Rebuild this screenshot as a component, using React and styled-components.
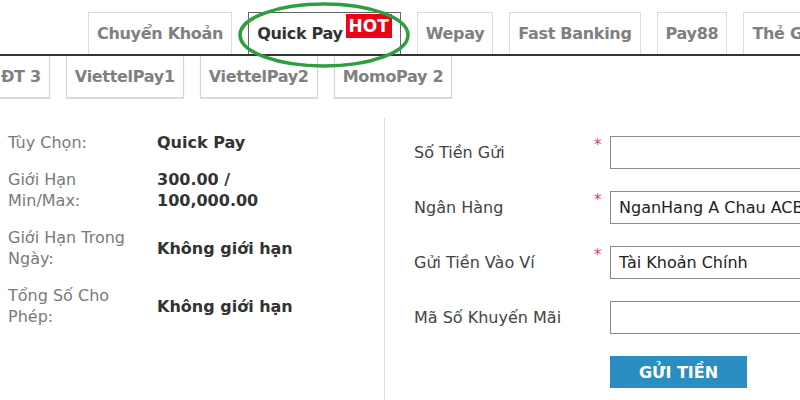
import React from 'react';
import styled, { createGlobalStyle } from 'styled-components';

const GlobalStyle = createGlobalStyle`
  body {
    margin: 0;
    background: #fff;
    font-family: Tahoma, "DejaVu Sans", sans-serif;
    overflow: hidden;
  }
`;

const Page = styled.div`
  width: 800px;
  height: 400px;
  overflow: hidden;
  background: #fff;
`;

const TabsArea = styled.div`
  position: relative;
`;

const TopRow = styled.div`
  display: flex;
  gap: 16px;
  padding: 12px 0 0 88px;
  border-bottom: 2px solid #333;
  white-space: nowrap;
`;

const Tab = styled.div`
  position: relative;
  display: flex;
  align-items: center;
  flex-shrink: 0;
  height: 42px;
  box-sizing: border-box;
  padding: 0 ${p => (p.hot ? '57px' : '8px')} 0 8px;
  border: 1px solid ${p => (p.active ? '#666' : '#ddd')};
  border-bottom: none;
  font-size: 16px;
  font-weight: bold;
  letter-spacing: -0.3px;
  color: ${p => (p.active ? '#333' : '#808080')};
  background: #fff;
`;

const Hot = styled.span`
  position: absolute;
  top: 1px;
  right: 8px;
  width: 46px;
  height: 24px;
  display: flex;
  align-items: center;
  justify-content: center;
  background: #ee0016;
  color: #fff;
  font-size: 17px;
  font-weight: bold;
  letter-spacing: 0;
`;

const BottomRow = styled.div`
  display: flex;
  gap: 16px;
  margin-left: -8px;
  white-space: nowrap;
`;

const SubTab = styled.div`
  display: flex;
  align-items: center;
  flex-shrink: 0;
  height: 42px;
  box-sizing: border-box;
  padding: 0 8px;
  border: 1px solid #d4d4d4;
  border-top: none;
  box-shadow: 0 1px 1px rgba(0, 0, 0, 0.12);
  font-size: 16px;
  font-weight: bold;
  letter-spacing: -0.3px;
  color: #808080;
`;

const Circle = styled.svg`
  position: absolute;
  left: 237px;
  top: 1px;
  pointer-events: none;
`;

const Content = styled.div`
  display: flex;
  margin-top: 20px;
`;

const InfoPanel = styled.div`
  flex-shrink: 0;
  width: 385px;
  height: 290px;
  box-sizing: border-box;
  padding: 14px 0 0 8px;
  border-right: 1px solid #ddd;
  display: grid;
  grid-template-columns: 149px 1fr;
  grid-auto-rows: min-content;
  row-gap: 16px;
  font-size: 16px;
  line-height: 21px;
`;

const InfoLabel = styled.div`
  max-width: 128px;
  color: #7a7a7a;
`;

const InfoValue = styled.div`
  align-self: center;
  max-width: 150px;
  color: #333;
  font-weight: bold;
`;

const FormPanel = styled.div`
  flex: 1;
  padding: 18px 0 0 29px;
  display: flex;
  flex-direction: column;
  gap: 22px;
`;

const FormRow = styled.div`
  display: flex;
  align-items: center;
  height: 33px;
`;

const FieldLabel = styled.div`
  width: 180px;
  flex-shrink: 0;
  font-size: 16px;
  color: #444;
`;

const Star = styled.span`
  align-self: flex-start;
  width: 16px;
  flex-shrink: 0;
  font-size: 15px;
  line-height: 18px;
  color: #d9475f;
`;

const Field = styled.input`
  width: 260px;
  height: 33px;
  box-sizing: border-box;
  flex-shrink: 0;
  margin: 0 0 0 ${p => (p.noStar ? '16px' : '0')};
  padding: 0 8px;
  border: 1px solid #8a8a8a;
  font-family: inherit;
  font-size: 16px;
  color: #222;
  background: #fff;
  outline: none;
`;

const SubmitButton = styled.button`
  align-self: flex-start;
  margin-left: 196px;
  width: 137px;
  height: 32px;
  border: none;
  background: #2b8ec3;
  color: #fff;
  font-family: inherit;
  font-size: 16px;
  font-weight: bold;
`;

const topTabs = ['Chuyển Khoản', 'Quick Pay', 'Wepay', 'Fast Banking', 'Pay88', 'Thẻ Game'];
const subTabs = ['ĐT 3', 'ViettelPay1', 'ViettelPay2', 'MomoPay 2'];

const info = [
  ['Tùy Chọn:', 'Quick Pay'],
  ['Giới Hạn Min/Max:', '300.00 / 100,000.00'],
  ['Giới Hạn Trong Ngày:', 'Không giới hạn'],
  ['Tổng Số Cho Phép:', 'Không giới hạn']
];

const fields = [
  { label: 'Số Tiền Gửi', required: true, value: '' },
  { label: 'Ngân Hàng', required: true, value: 'NganHang A Chau ACB' },
  { label: 'Gửi Tiền Vào Ví', required: true, value: 'Tài Khoản Chính' },
  { label: 'Mã Số Khuyến Mãi', required: false, value: '' }
];

export default function App() {
  return (
    <Page>
      <GlobalStyle />
      <TabsArea>
        <TopRow>
          {topTabs.map(name => {
            let active = name === 'Quick Pay';
            return (
              <Tab key={name} active={active} hot={active}>
                {name}
                {active && <Hot>HOT</Hot>}
              </Tab>
            );
          })}
        </TopRow>
        <BottomRow>
          {subTabs.map(name => (
            <SubTab key={name}>{name}</SubTab>
          ))}
        </BottomRow>
        <Circle width="176" height="70" viewBox="0 0 176 70">
          <ellipse cx="87" cy="34" rx="84" ry="31" fill="none" stroke="#2f9e3f" strokeWidth="3.5" />
        </Circle>
      </TabsArea>
      <Content>
        <InfoPanel>
          {info.map(([label, value]) => (
            <React.Fragment key={label}>
              <InfoLabel>{label}</InfoLabel>
              <InfoValue>{value}</InfoValue>
            </React.Fragment>
          ))}
        </InfoPanel>
        <FormPanel>
          {fields.map(f => (
            <FormRow key={f.label}>
              <FieldLabel>{f.label}</FieldLabel>
              {f.required && <Star>*</Star>}
              <Field noStar={!f.required} defaultValue={f.value} readOnly />
            </FormRow>
          ))}
          <SubmitButton>GỬI TIỀN</SubmitButton>
        </FormPanel>
      </Content>
    </Page>
  );
}
